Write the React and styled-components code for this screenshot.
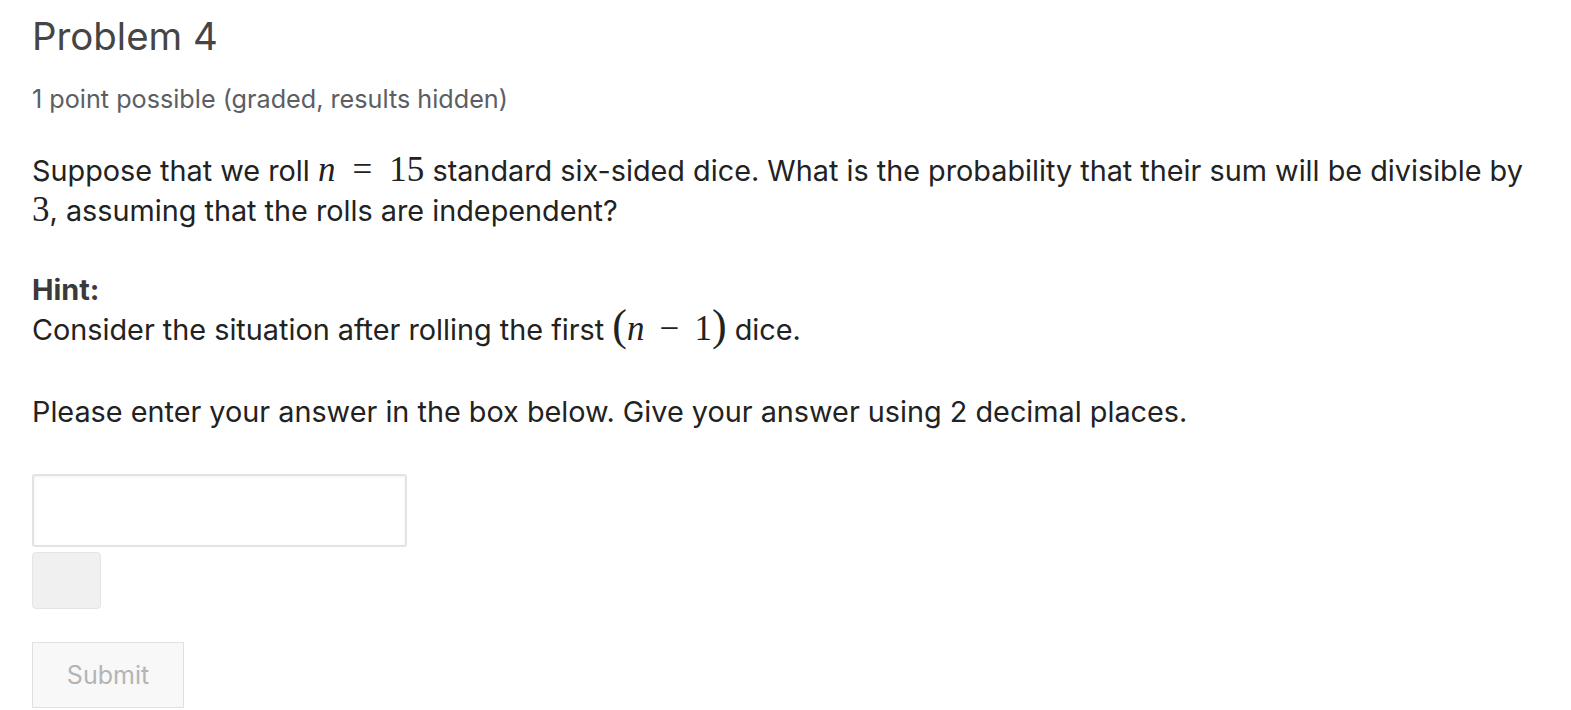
import React from "react";
import styled, { createGlobalStyle } from "styled-components";

const GlobalStyle = createGlobalStyle`
  body {
    margin: 0;
    background: #fff;
    font-family: Inter, "Noto Sans", sans-serif;
    color: #212529;
  }
`;

const Page = styled.div`
  padding: 13px 32px 0 32px;
  width: 100%;
  box-sizing: border-box;
`;

const Title = styled.h2`
  margin: 0;
  font-size: 38.4px;
  font-weight: 400;
  line-height: 46px;
  color: #454545;
`;

const Meta = styled.div`
  margin-top: 22px;
  font-size: 25.2px;
  line-height: 36px;
  color: #5b5e63;
`;

const Para = styled.p`
  margin: ${(p) => p.mt || 0}px 0 0;
  font-size: 28.8px;
  line-height: 40px;
  color: #222;
`;

const HintLabel = styled.div`
  margin-top: 39px;
  font-size: 28.8px;
  line-height: 40px;
  font-weight: 700;
  color: #3a3a3a;
`;

// math pieces, rendered in a serif like the TeX output
const M = styled.span`
  font-family: "Liberation Serif", "DejaVu Serif", serif;
  font-size: 35px;
  line-height: 0;
  font-style: ${(p) => (p.it ? "italic" : "normal")};
  padding: 0 ${(p) => p.pad || 0}px;
`;

const Paren = styled.span`
  font-family: "Liberation Serif", "DejaVu Serif", serif;
  font-size: 44px;
  line-height: 0;
`;

const AnswerInput = styled.input`
  display: block;
  margin-top: 42px;
  width: 375px;
  height: 73px;
  box-sizing: border-box;
  border: 2px solid #e3e3e3;
  border-radius: 3px;
  box-shadow: inset 0 1px 3px rgba(0, 0, 0, 0.06);
  background: #fff;
`;

const Preview = styled.div`
  margin-top: 5px;
  width: 69px;
  height: 57px;
  box-sizing: border-box;
  background: #f0f0f0;
  border: 1px solid #e4e4e4;
  border-radius: 4px;
`;

const SubmitButton = styled.button`
  display: block;
  margin-top: 33px;
  width: 152px;
  height: 66px;
  box-sizing: border-box;
  background: #f8f8f8;
  border: 1px solid #e0e0e0;
  border-radius: 0;
  font-family: Inter, "Noto Sans", sans-serif;
  font-size: 25px;
  color: #b4b4b4;
`;

export default function App() {
  return (
    <>
      <GlobalStyle />
      <Page>
        <Title>Problem 4</Title>
        <Meta>1 point possible (graded, results hidden)</Meta>
        <Para mt={34}>
          Suppose that we roll <M it>n</M> <M pad={9}>=</M> <M>15</M> standard six-sided dice.
          What is the probability that their sum will be divisible by <M>3</M>, assuming that
          the rolls are independent?
        </Para>
        <HintLabel>Hint:</HintLabel>
        <Para>
          Consider the situation after rolling the first <Paren>(</Paren>
          <M it>n</M> <M pad={7}>−</M> <M>1</M>
          <Paren>)</Paren> dice.
        </Para>
        <Para mt={42}>
          Please enter your answer in the box below. Give your answer using 2 decimal places.
        </Para>
        <AnswerInput type="text" aria-label="answer" />
        <Preview />
        <SubmitButton>Submit</SubmitButton>
      </Page>
    </>
  );
}
